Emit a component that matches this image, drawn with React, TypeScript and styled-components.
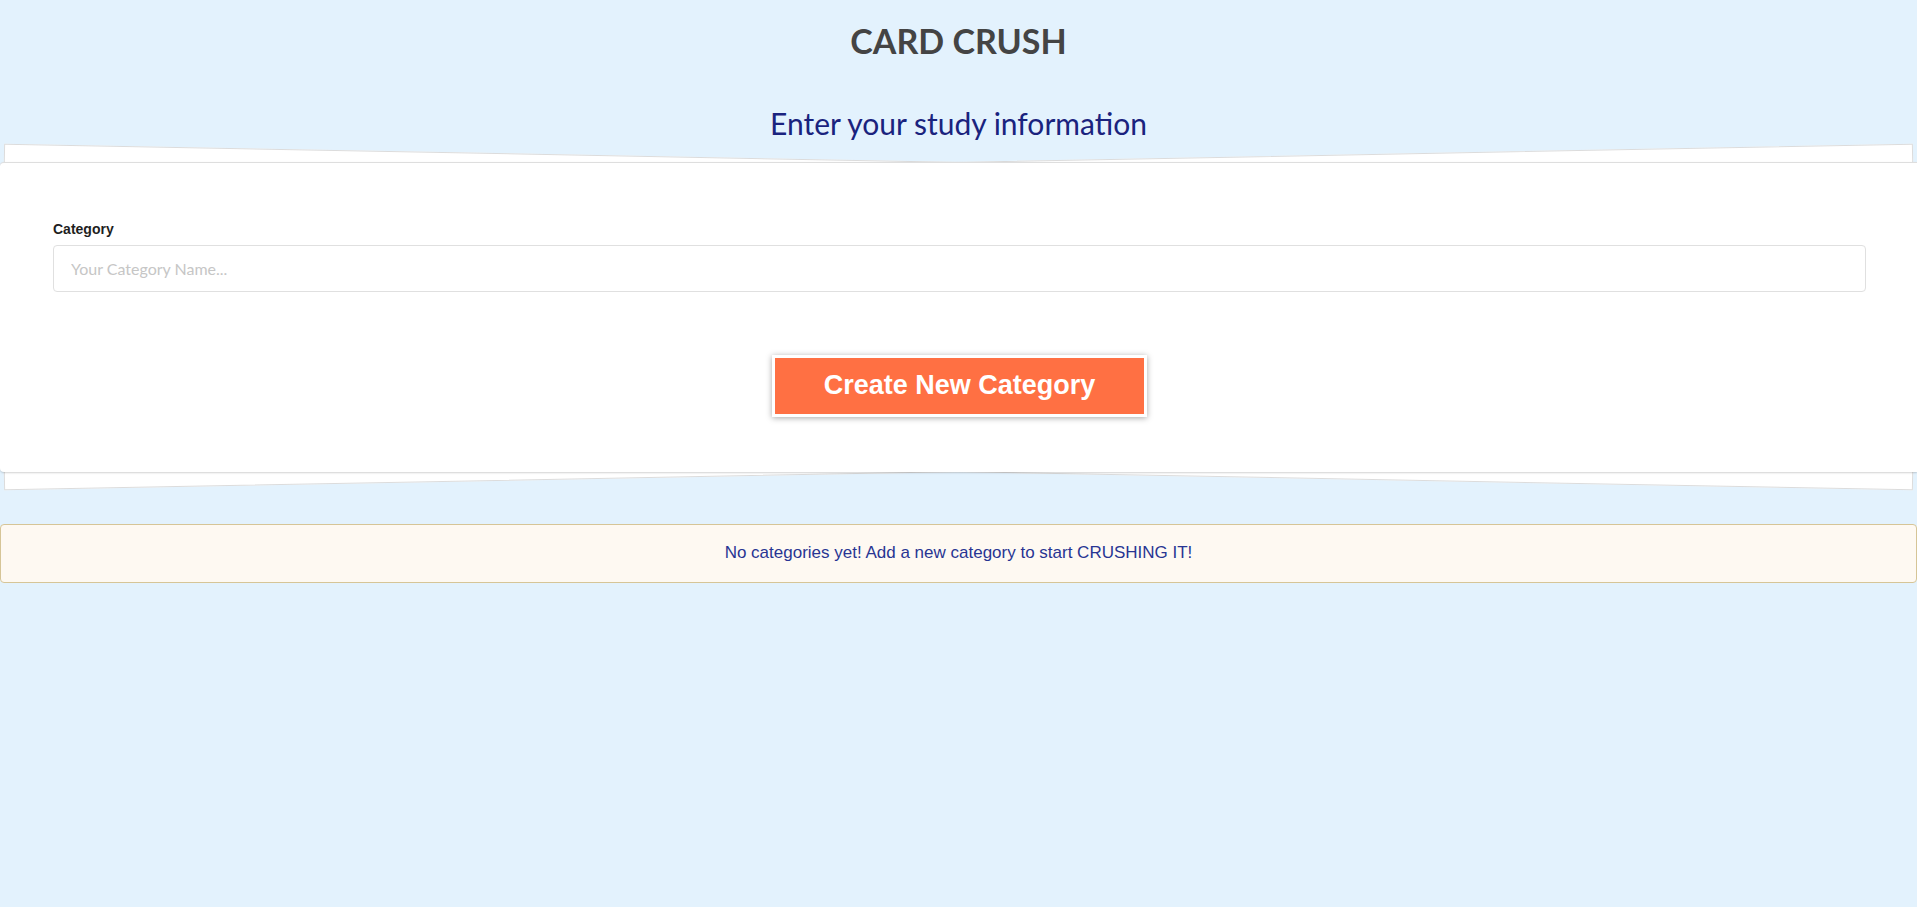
import React from "react";
import styled, { createGlobalStyle } from "styled-components";

const GlobalStyle = createGlobalStyle`
  html, body {
    margin: 0;
    padding: 0;
    background: #e3f2fd;
  }
  body {
    font-family: "Lato", "Liberation Sans", sans-serif;
    overflow-x: hidden;
  }
  * { box-sizing: border-box; }
`;

const Page = styled.div`
  display: flex;
  flex-direction: column;
  align-items: stretch;
  min-height: 907px;
  padding-top: 21px;
`;

const Title = styled.h1`
  margin: 0;
  font-family: "Lato", sans-serif;
  font-weight: 700;
  font-size: 34px;
  line-height: 1.2;
  color: #444444;
  text-align: center;
`;

const Subtitle = styled.h2`
  margin: 43px 0 0;
  font-family: "Lato", sans-serif;
  font-weight: 400;
  font-size: 30px;
  line-height: 1.2;
  color: #1a237e;
  text-align: center;
`;

const PaperStack = styled.div`
  position: relative;
  z-index: 0;
  margin-top: 21px;

  &::before,
  &::after {
    content: "";
    position: absolute;
    top: 0;
    bottom: 0;
    left: 1px;
    right: 1px;
    background: #ffffff;
    border: 1px solid #dcdcdc;
    z-index: -1;
  }
  &::before {
    transform: rotate(-1.1deg);
  }
  &::after {
    transform: rotate(1.1deg);
  }
`;

const Card = styled.form`
  display: flex;
  flex-direction: column;
  background: #ffffff;
  border-top: 1px solid #dedede;
  border-radius: 4px 0 0 4px;
  box-shadow: 0 1px 2px rgba(0, 0, 0, 0.18);
  padding: 58px 51px 55px 53px;
`;

const Label = styled.label`
  font-family: "Liberation Sans", Arial, sans-serif;
  font-weight: 700;
  font-size: 14px;
  line-height: 16px;
  color: #1e1e1e;
`;

const Input = styled.input`
  margin-top: 8px;
  height: 47px;
  width: 100%;
  border: 1px solid #e0e0e0;
  border-radius: 4px;
  padding: 0 17px;
  font-family: "Lato", sans-serif;
  font-size: 16px;
  color: #333;
  background: #fff;
  outline: none;
  &::placeholder {
    color: #c6c6c6;
  }
`;

const ButtonRow = styled.div`
  display: flex;
  justify-content: center;
  margin-top: 63px;
`;

const CreateButton = styled.button`
  width: 375px;
  height: 62px;
  border: 3px solid #ffffff;
  background: #ff7043;
  color: #ffffff;
  font-family: "Liberation Sans", Arial, sans-serif;
  font-weight: 700;
  font-size: 27px;
  padding: 0;
  cursor: pointer;
  box-shadow: 0 1px 6px rgba(0, 0, 0, 0.35);
`;

const Alert = styled.div`
  margin-top: 52px;
  height: 59px;
  display: flex;
  align-items: center;
  justify-content: center;
  background: #fef9f2;
  border: 1px solid #d6c597;
  border-radius: 4px;
  font-family: "Liberation Sans", Arial, sans-serif;
  font-size: 17px;
  color: #283593;
`;

export default function App() {
  return (
    <>
      <GlobalStyle />
      <Page>
        <Title>CARD CRUSH</Title>
        <Subtitle>Enter your study information</Subtitle>
        <PaperStack>
          <Card onSubmit={(e) => e.preventDefault()}>
            <Label htmlFor="category">Category</Label>
            <Input id="category" type="text" placeholder="Your Category Name..." />
            <ButtonRow>
              <CreateButton type="submit">Create New Category</CreateButton>
            </ButtonRow>
          </Card>
        </PaperStack>
        <Alert>No categories yet! Add a new category to start CRUSHING IT!</Alert>
      </Page>
    </>
  );
}
